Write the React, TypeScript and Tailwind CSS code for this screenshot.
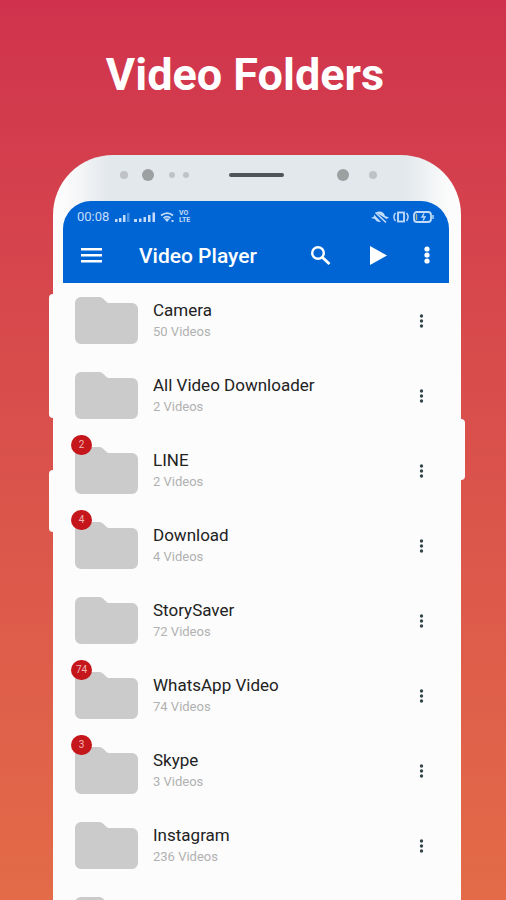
const folders = [
  { name: 'Camera', videos: 50, unread: 0 },
  { name: 'All Video Downloader', videos: 2, unread: 0 },
  { name: 'LINE', videos: 2, unread: 2 },
  { name: 'Download', videos: 4, unread: 4 },
  { name: 'StorySaver', videos: 72, unread: 0 },
  { name: 'WhatsApp Video', videos: 74, unread: 74 },
  { name: 'Skype', videos: 3, unread: 3 },
  { name: 'Instagram', videos: 236, unread: 0 },
]

function FolderIcon() {
  return (
    <svg viewBox="0 0 63 48" className="h-12 w-[63px]" fill="#cbcbcb" aria-hidden="true">
      <path d="M6 0h18c1.600 0 2.800.5 4 1.600l3.300 3.200c.8.800 1.600 1.200 2.700 1.200H57a6 6 0 0 1 6 6V41a6 6 0 0 1-6 6H6a6 6 0 0 1-6-6V6a6 6 0 0 1 6-6z" />
    </svg>
  )
}

function StatusBar() {
  return (
    <div className="flex h-8 items-center justify-between pr-[14px] pl-[14px] text-[#c3dcfa]">
      <div className="flex items-center">
        <span className="w-[37px] text-[13px] leading-4">00:08</span>
        <svg width="62" height="14" viewBox="0 0 62 14" fill="currentColor" aria-hidden="true">
          <path d="M1 9h2.500v3H1zM5 8h2.500v4H5zM9 5h2.500v7H9z" />
          <path d="M13 3h2.500v9H13z" opacity=".4" />
          <path d="M20 9h3v3h-3zM25 8.500h2.500V12H25zM29.500 7H32v5h-2.500zM34 5h2.500v7H34zM38.500 2.500H41V12h-2.500z" />
          <path
            d="M47 5.500c4-3 8.500-3 12 0M49.500 8c2-1.500 5-1.500 7 0"
            fill="none"
            stroke="currentColor"
            strokeWidth="1.800"
          />
          <path d="M50 8.500h6L53 12zM57.500 10h2v2h-2z" />
        </svg>
        <div className="ml-[3px] text-[7px] leading-[7px] font-bold">
          <div>VO</div>
          <div>LTE</div>
        </div>
      </div>
      <svg width="64" height="14" viewBox="0 0 64 14" fill="none" stroke="currentColor" strokeWidth="1.400" aria-hidden="true">
        <path d="M5 2.500C9 0 13.500 2.500 14 6l4 1.500-2.500 1.500zM3 4.500l7 7.500C7 12.500 5 11 4 9L0 8l3-1.500z" fill="currentColor" stroke="none" />
        <path d="M4.500 2.500L15 12.500" strokeWidth="1.600" />
        <rect x="27" y="2.500" width="6" height="9" strokeWidth="1.800" />
        <path d="M24.500 3c-2 2.500-2 5.500 0 8M35.500 3c2 2.500 2 5.500 0 8" />
        <rect x="43" y="2" width="17" height="10" rx="3" strokeWidth="1.800" />
        <path d="M62 5v4" />
        <path d="M45.500 4v6" stroke="#b9b48c" />
        <path d="M53 3.500l-2 3.500h3l-2 3.500" />
      </svg>
    </div>
  )
}

export default function App() {
  return (
    <main className="flex h-screen flex-col overflow-hidden bg-linear-to-b from-[#d0324d] to-[#e36b48] font-['Roboto',sans-serif]">
      <h1 className="pt-[50px] pr-4 text-center text-[45px] leading-[50px] font-bold text-white">Video Folders</h1>

      <div className="relative mt-[55px] mr-[45px] ml-[53px] min-h-0 flex-1">
        {/* side keys */}
        <span className="absolute top-[139px] -left-1 h-[124px] w-2 rounded bg-[#fcfcfc]" />
        <span className="absolute top-[315px] -left-1 h-[62px] w-2 rounded bg-[#fcfcfc]" />
        <span className="absolute top-[264px] -right-1 h-[61px] w-2 rounded bg-[#fcfcfc]" />

        <div className="relative h-full overflow-hidden rounded-t-[60px] bg-[#fcfcfc] bg-[linear-gradient(to_right,#fcfcfc_12px,#e3e8ec_56px,#e3e8ec_calc(100%-56px),#fcfcfc_calc(100%-12px))] bg-[length:100%_80px] bg-no-repeat pr-3 pl-[10px]">
          <div className="flex h-[46px] items-center justify-between pr-[72px] pb-[6px] pl-[57px]">
            <div className="flex items-center text-[#bfc3c5]">
              <span className="size-2 rounded-full bg-current" />
              <span className="ml-[14px] size-3 rounded-full bg-[#9da0a1]" />
              <span className="ml-[15px] size-[6px] rounded-full bg-current" />
              <span className="ml-2 size-[6px] rounded-full bg-current" />
            </div>
            <span className="mr-[14px] h-1 w-[55px] rounded-full bg-[#4d5557]" />
            <div className="flex items-center">
              <span className="size-3 rounded-full bg-[#9da0a1]" />
              <span className="ml-5 size-2 rounded-full bg-[#bfc3c5]" />
            </div>
          </div>

          <header className="rounded-t-[28px] bg-[#0065d4] text-white">
            <StatusBar />
            <div className="flex h-[50px] items-center pr-[19px] pb-[6px] pl-[18px]">
              <button aria-label="Open menu" className="w-[58px]">
                <svg viewBox="0 0 21 15" className="h-[15px] w-[21px]" fill="currentColor">
                  <path d="M0 0h21v2.400H0zM0 6h21v2.400H0zM0 12h21v2.400H0z" />
                </svg>
              </button>
              <h2 className="flex-1 pt-[2px] text-[21px] leading-8 font-medium">Video Player</h2>
              <button aria-label="Search">
                <svg viewBox="0 0 21 19" className="h-[19px] w-[21px]" fill="none" stroke="currentColor" strokeWidth="2.400">
                  <circle cx="8" cy="7" r="5.800" />
                  <path d="M12 11l7.500 7" strokeWidth="2.800" />
                </svg>
              </button>
              <button aria-label="Play" className="ml-[39px]">
                <svg viewBox="0 0 17 19" className="h-[19px] w-[17px]" fill="currentColor">
                  <path d="M0 0l17 9.500L0 19z" />
                </svg>
              </button>
              <button aria-label="More options" className="ml-[37px]">
                <svg viewBox="0 0 6 18" className="h-[18px] w-[6px]" fill="currentColor">
                  <circle cx="3" cy="3" r="2.600" />
                  <circle cx="3" cy="9" r="2.600" />
                  <circle cx="3" cy="15" r="2.600" />
                </svg>
              </button>
            </div>
          </header>

          <ul>
            {folders.map((folder) => (
              <li key={folder.name} className="flex h-[75px] items-center pr-[25px] pl-3">
                <div className="relative">
                  <FolderIcon />
                  {folder.unread > 0 && (
                    <span className="absolute -top-3 -left-1 flex h-5 w-[21px] items-center justify-center rounded-full bg-[#c5161b] text-[10px] text-[#f2b5b6]">
                      {folder.unread}
                    </span>
                  )}
                </div>
                <div className="ml-[15px] flex-1 pb-px">
                  <p className="text-[17px] leading-6 text-[#222]">{folder.name}</p>
                  <p className="text-[13px] leading-5 text-[#b1b1b1]">{folder.videos} Videos</p>
                </div>
                <button aria-label={`${folder.name} options`} className="text-[#35464a]">
                  <svg viewBox="0 0 5 14" className="h-[14px] w-[5px]" fill="currentColor">
                    <circle cx="2.500" cy="2" r="1.700" />
                    <circle cx="2.500" cy="7" r="1.700" />
                    <circle cx="2.500" cy="12" r="1.700" />
                  </svg>
                </button>
              </li>
            ))}
            {/* next folder peeks in at the fold */}
            <li className="flex h-[75px] items-center pl-3">
              <FolderIcon />
            </li>
          </ul>
        </div>
      </div>
    </main>
  )
}
